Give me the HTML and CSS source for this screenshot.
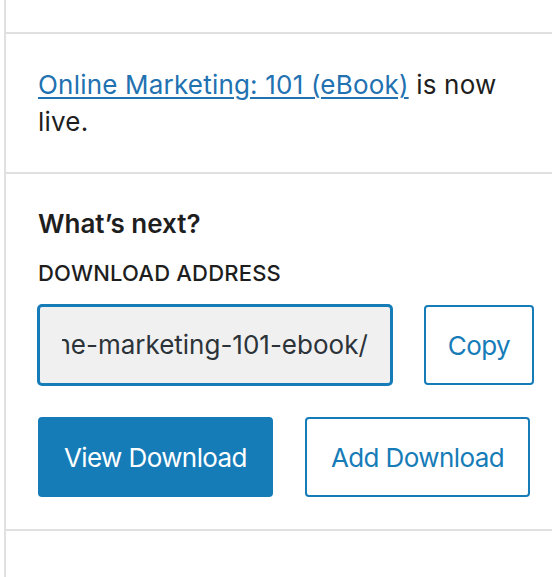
FILE: index.html
```html
<!DOCTYPE html>
<html lang="en">
<head>
<meta charset="utf-8">
<title>Post-publish panel</title>
<link rel="stylesheet" href="styles.css">
</head>
<body>
<div class="sidebar">
  <div class="panel-top"></div>
  <div class="panel">
    <p class="notice"><a class="post-link" href="#">Online Marketing: 101 (eBook)</a> is now live.</p>
  </div>
  <div class="panel">
    <p class="subheader">What’s next?</p>
    <div class="label">Download address</div>
    <div class="address-row">
      <div class="field"><div class="field-clip"><span>https://example.com/downloads/online-marketing-101-ebook/</span></div></div>
      <button class="btn btn-secondary btn-copy" type="button">Copy</button>
    </div>
    <div class="actions">
      <button class="btn btn-primary" type="button">View Download</button>
      <button class="btn btn-secondary" type="button">Add Download</button>
    </div>
  </div>
  <div class="panel-bottom"></div>
</div>
</body>
</html>
```
FILE: styles.css
```css
html, body {
  margin: 0;
  padding: 0;
  background: #ffffff;
}
body {
  font-family: "Inter", "Roboto", "Liberation Sans", sans-serif;
  color: #1e1e1e;
  font-size: 26px;
  line-height: 1.4;
  overflow: hidden;
  height: 577px;
}
.sidebar {
  margin-left: 4px;
  border-left: 2px solid #e0e0e0;
  min-height: 577px;
}
.panel-top {
  height: 32px;
}
.panel {
  border-top: 2px solid #e0e0e0;
  padding: 32px 18px 32px 32px;
}
.panel-bottom {
  border-top: 2px solid #e0e0e0;
  height: 60px;
}
.notice {
  margin: 0;
  letter-spacing: 0.2px;
  line-height: 37px;
}
.post-link {
  color: #2271b1;
  text-decoration: underline;
  text-underline-offset: 3px;
  text-decoration-thickness: 2px;
}
.subheader {
  margin: 0;
  font-weight: 600;
  line-height: 36px;
}
.label {
  margin-top: 16px;
  font-size: 22px;
  line-height: 31px;
  text-transform: uppercase;
  font-weight: 500;
  letter-spacing: 0.2px;
}
.address-row {
  display: flex;
  gap: 32px;
  margin-top: 16px;
  align-items: center;
}
.field {
  flex: 1;
  height: 80px;
  box-sizing: border-box;
  background: #f0f0f0;
  border: 2px solid #167cb8;
  box-shadow: 0 0 0 1px #167cb8;
  border-radius: 4px;
  padding: 0 22px;
  display: flex;
  align-items: center;
  min-width: 0;
}
.field-clip {
  overflow: hidden;
  display: flex;
  justify-content: flex-end;
  white-space: nowrap;
  width: 100%;
  color: #2c3338;
}
.field-clip span {
  flex-shrink: 0;
}
.actions {
  display: flex;
  gap: 32px;
  margin-top: 32px;
}
.btn {
  font-family: inherit;
  font-size: 26px;
  height: 80px;
  box-sizing: border-box;
  padding: 0 24px;
  border-radius: 4px;
  border: 2px solid #167cb8;
  cursor: pointer;
  white-space: nowrap;
  letter-spacing: -0.6px;
}
.btn-copy {
  padding: 0 22px;
}
.btn-primary {
  background: #167cb8;
  color: #ffffff;
}
.btn-secondary {
  background: #ffffff;
  color: #167cb8;
}
```
